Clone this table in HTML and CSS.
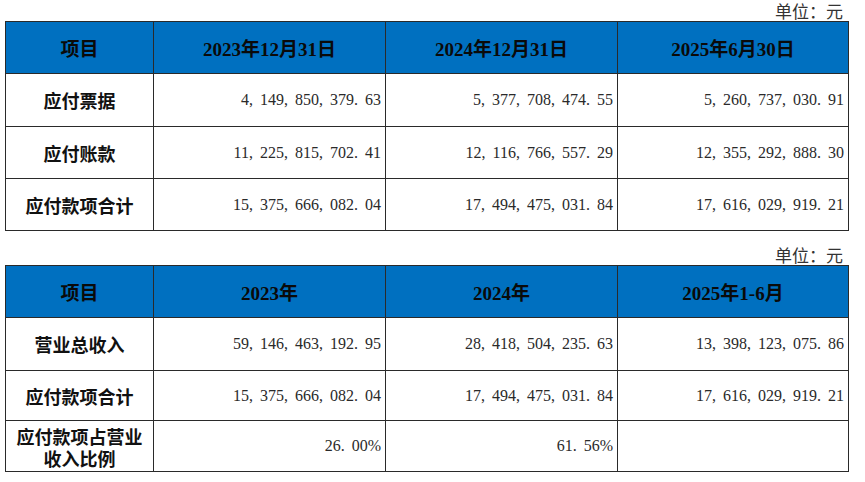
FILE: index.html
```html
<!DOCTYPE html>
<html lang="zh-CN">
<head>
<meta charset="utf-8">
<title>应付款项</title>
<link rel="stylesheet" href="styles.css">
</head>
<body>
<div class="page">
  <div class="unit">单位：元</div>
  <table class="grid">
    <colgroup><col class="c1"><col class="c2"><col class="c3"><col class="c4"></colgroup>
    <tr class="head">
      <th>项目</th><th>2023年12月31日</th><th>2024年12月31日</th><th>2025年6月30日</th>
    </tr>
    <tr class="r53">
      <td class="label">应付票据</td>
      <td class="num">4<span class="pt">,</span>149<span class="pt">,</span>850<span class="pt">,</span>379<span class="pt">.</span>63</td>
      <td class="num">5<span class="pt">,</span>377<span class="pt">,</span>708<span class="pt">,</span>474<span class="pt">.</span>55</td>
      <td class="num">5<span class="pt">,</span>260<span class="pt">,</span>737<span class="pt">,</span>030<span class="pt">.</span>91</td>
    </tr>
    <tr class="r52">
      <td class="label">应付账款</td>
      <td class="num">11<span class="pt">,</span>225<span class="pt">,</span>815<span class="pt">,</span>702<span class="pt">.</span>41</td>
      <td class="num">12<span class="pt">,</span>116<span class="pt">,</span>766<span class="pt">,</span>557<span class="pt">.</span>29</td>
      <td class="num">12<span class="pt">,</span>355<span class="pt">,</span>292<span class="pt">,</span>888<span class="pt">.</span>30</td>
    </tr>
    <tr class="r52">
      <td class="label">应付款项合计</td>
      <td class="num">15<span class="pt">,</span>375<span class="pt">,</span>666<span class="pt">,</span>082<span class="pt">.</span>04</td>
      <td class="num">17<span class="pt">,</span>494<span class="pt">,</span>475<span class="pt">,</span>031<span class="pt">.</span>84</td>
      <td class="num">17<span class="pt">,</span>616<span class="pt">,</span>029<span class="pt">,</span>919<span class="pt">.</span>21</td>
    </tr>
  </table>

  <div class="unit second">单位：元</div>
  <table class="grid">
    <colgroup><col class="c1"><col class="c2"><col class="c3"><col class="c4"></colgroup>
    <tr class="head">
      <th>项目</th><th>2023年</th><th>2024年</th><th>2025年1-6月</th>
    </tr>
    <tr class="r53">
      <td class="label">营业总收入</td>
      <td class="num">59<span class="pt">,</span>146<span class="pt">,</span>463<span class="pt">,</span>192<span class="pt">.</span>95</td>
      <td class="num">28<span class="pt">,</span>418<span class="pt">,</span>504<span class="pt">,</span>235<span class="pt">.</span>63</td>
      <td class="num">13<span class="pt">,</span>398<span class="pt">,</span>123<span class="pt">,</span>075<span class="pt">.</span>86</td>
    </tr>
    <tr class="r50">
      <td class="label">应付款项合计</td>
      <td class="num">15<span class="pt">,</span>375<span class="pt">,</span>666<span class="pt">,</span>082<span class="pt">.</span>04</td>
      <td class="num">17<span class="pt">,</span>494<span class="pt">,</span>475<span class="pt">,</span>031<span class="pt">.</span>84</td>
      <td class="num">17<span class="pt">,</span>616<span class="pt">,</span>029<span class="pt">,</span>919<span class="pt">.</span>21</td>
    </tr>
    <tr class="r51">
      <td class="label wrap">应付款项占营业<br>收入比例</td>
      <td class="num">26<span class="pt">.</span>00%</td>
      <td class="num">61<span class="pt">.</span>56%</td>
      <td class="num"></td>
    </tr>
  </table>
</div>
</body>
</html>
```

FILE: styles.css
```css
html, body {
  margin: 0;
  padding: 0;
  background: #ffffff;
}

.page {
  padding: 0 17px 0 5px;
  font-family: "Liberation Serif", "Noto Sans CJK SC", serif;
  color: #1a1a1a;
}

.unit {
  box-sizing: border-box;
  height: 21px;
  padding-top: 1px;
  padding-right: 5px;
  line-height: 20px;
  text-align: right;
  font-family: "Noto Sans CJK SC", sans-serif;
  font-size: 17px;
  color: #333333;
}

.unit.second {
  margin-top: 13px;
}

.grid {
  width: 843px;
  border-collapse: collapse;
  table-layout: fixed;
}

.c1 { width: 148px; }
.c2 { width: 232px; }
.c3 { width: 232px; }
.c4 { width: 231px; }

.grid th,
.grid td {
  border: 1px solid #2a2a2a;
  padding: 0;
}

.head {
  height: 52px;
}

.grid .head th {
  background: #0070c0;
  color: #0a0a0a;
  font-family: "Liberation Serif", "Noto Sans CJK SC", serif;
  font-weight: bold;
  font-size: 19px;
  text-align: center;
  vertical-align: middle;
}

.r53 { height: 53px; }
.r52 { height: 52px; }
.r51 { height: 51px; }
.r50 { height: 50px; }

.grid td.label {
  font-family: "Noto Sans CJK SC", sans-serif;
  font-weight: bold;
  font-size: 18px;
  color: #111111;
  text-align: center;
  vertical-align: middle;
  line-height: 24px;
}

.grid td.label.wrap {
  font-size: 18px;
  line-height: 22px;
  padding-top: 1px;
}

.grid td.num {
  font-family: "Liberation Serif", serif;
  font-size: 16px;
  color: #2a2a2a;
  text-align: right;
  vertical-align: middle;
  padding-right: 4px;
  white-space: nowrap;
}

.pt {
  display: inline-block;
  width: 11px;
  text-align: left;
}
```
